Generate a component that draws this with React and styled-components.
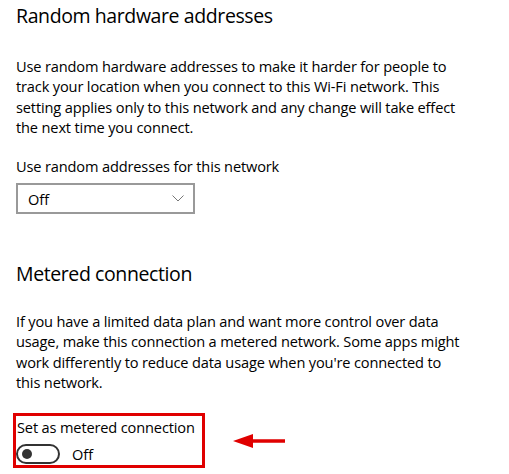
import React from 'react'
import styled, { createGlobalStyle } from 'styled-components'

const Global = createGlobalStyle`
  html, body { margin: 0; padding: 0; background: #fff; }
  body {
    font-family: "Open Sans", "Noto Sans", Arial, sans-serif;
    color: #000;
    width: 509px;
    height: 474px;
    overflow: hidden;
  }
`

const Page = styled.div`
  display: flex;
  flex-direction: column;
  padding: 0 16px;
`

const Heading = styled.h2`
  margin: ${p => p.top}px 0 0;
  font-size: 19.5px;
  font-weight: 400;
  line-height: 28px;
  letter-spacing: -0.4px;
  color: #000;
`

const Body = styled.p`
  margin: ${p => p.top}px 0 0;
  font-size: 14.6px;
  line-height: 20.3px;
  letter-spacing: -0.15px;
  color: #000;
  white-space: nowrap;
`

const Label = styled.div`
  margin-top: ${p => p.top}px;
  font-size: 14.6px;
  line-height: 20px;
  letter-spacing: -0.15px;
`

const Select = styled.div`
  margin-top: 7px;
  width: 179px;
  height: 31px;
  box-sizing: border-box;
  border: 2px solid #999;
  display: flex;
  align-items: center;
  justify-content: space-between;
  padding: 0 9px 0 10px;
  font-size: 14.6px;
`

const MeteredRow = styled.div`
  display: flex;
  align-items: center;
  gap: 28px;
  margin: 21px 0 0 -3px;
`

const Highlight = styled.div`
  width: 192px;
  height: 55px;
  box-sizing: border-box;
  border: 3px solid #e00000;
  display: flex;
  flex-direction: column;
`

const ToggleRow = styled.div`
  display: flex;
  align-items: center;
  gap: 12px;
  margin-top: 7px;
  font-size: 14.6px;
`

const Toggle = styled.div`
  width: 44px;
  height: 20px;
  box-sizing: border-box;
  border: 2px solid #333;
  border-radius: 10px;
  display: flex;
  align-items: center;
  padding-left: 4px;
  &::after {
    content: '';
    width: 10px;
    height: 10px;
    border-radius: 50%;
    background: #333;
  }
`

const Chevron = () => (
  <svg width="12" height="7" viewBox="0 0 12 7">
    <path d="M0.5 0.5 L6 6 L11.5 0.5" fill="none" stroke="#777" strokeWidth="1" />
  </svg>
)

const Arrow = () => (
  <svg width="53" height="16" viewBox="0 0 53 16">
    <path d="M0 8 L20 1 L20 6.2 L52 6.2 L52 9.8 L20 9.8 L20 15 Z" fill="#e00000" />
  </svg>
)

export default function App() {
  return (
    <>
      <Global />
      <Page>
        <Heading top={2}>Random hardware addresses</Heading>
        <Body top={26}>
          Use random hardware addresses to make it harder for people to<br />
          track your location when you connect to this Wi-Fi network. This<br />
          setting applies only to this network and any change will take effect<br />
          the next time you connect.
        </Body>
        <Label top={19}>Use random addresses for this network</Label>
        <Select>
          <span>Off</span>
          <Chevron />
        </Select>
        <Heading top={46}>Metered connection</Heading>
        <Body top={23}>
          If you have a limited data plan and want more control over data<br />
          usage, make this connection a metered network. Some apps might<br />
          work differently to reduce data usage when you're connected to<br />
          this network.
        </Body>
        <MeteredRow>
          <Highlight>
            <Label top={1} style={{ paddingLeft: 1 }}>Set as metered connection</Label>
            <ToggleRow>
              <Toggle />
              <span>Off</span>
            </ToggleRow>
          </Highlight>
          <Arrow />
        </MeteredRow>
      </Page>
    </>
  )
}
